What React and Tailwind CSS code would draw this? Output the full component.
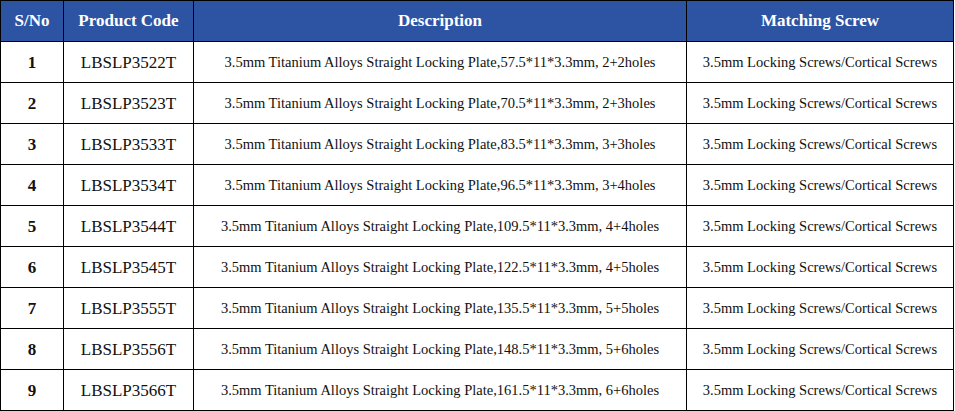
import React from "react";

const rows = [
  ["1", "LBSLP3522T", "57.5", "2+2"],
  ["2", "LBSLP3523T", "70.5", "2+3"],
  ["3", "LBSLP3533T", "83.5", "3+3"],
  ["4", "LBSLP3534T", "96.5", "3+4"],
  ["5", "LBSLP3544T", "109.5", "4+4"],
  ["6", "LBSLP3545T", "122.5", "4+5"],
  ["7", "LBSLP3555T", "135.5", "5+5"],
  ["8", "LBSLP3556T", "148.5", "5+6"],
  ["9", "LBSLP3566T", "161.5", "6+6"],
];

export default function App() {
  return (
    <div
      className="w-[955px] h-[411px] bg-white overflow-hidden"
      style={{ fontFamily: '"Liberation Serif", "Times New Roman", serif' }}
    >
      <div className="grid grid-cols-[63px_130px_493px_267px] w-[954px] border-l border-t border-black text-[#111]">
        {["S/No", "Product Code", "Description", "Matching Screw"].map((h) => (
          <div
            key={h}
            className="h-[41px] bg-[#2d54a3] text-white font-bold text-[17px] flex items-center justify-center border-r border-b border-black"
          >
            {h}
          </div>
        ))}
        {rows.map(([n, code, len, holes]) => (
          <React.Fragment key={n}>
            <div className="h-[41px] flex items-center justify-center border-r border-b border-black font-bold text-[17px] pt-px">
              {n}
            </div>
            <div className="h-[41px] flex items-center justify-center border-r border-b border-black text-[17px] pt-px">
              {code}
            </div>
            <div className="h-[41px] flex items-center justify-center border-r border-b border-black text-[14.5px] whitespace-nowrap pt-px">
              {`3.5mm Titanium Alloys Straight Locking Plate,${len}*11*3.3mm, ${holes}holes`}
            </div>
            <div className="h-[41px] flex items-center justify-center border-r border-b border-black text-[14.5px] whitespace-nowrap pt-px">
              3.5mm Locking Screws/Cortical Screws
            </div>
          </React.Fragment>
        ))}
      </div>
    </div>
  );
}
